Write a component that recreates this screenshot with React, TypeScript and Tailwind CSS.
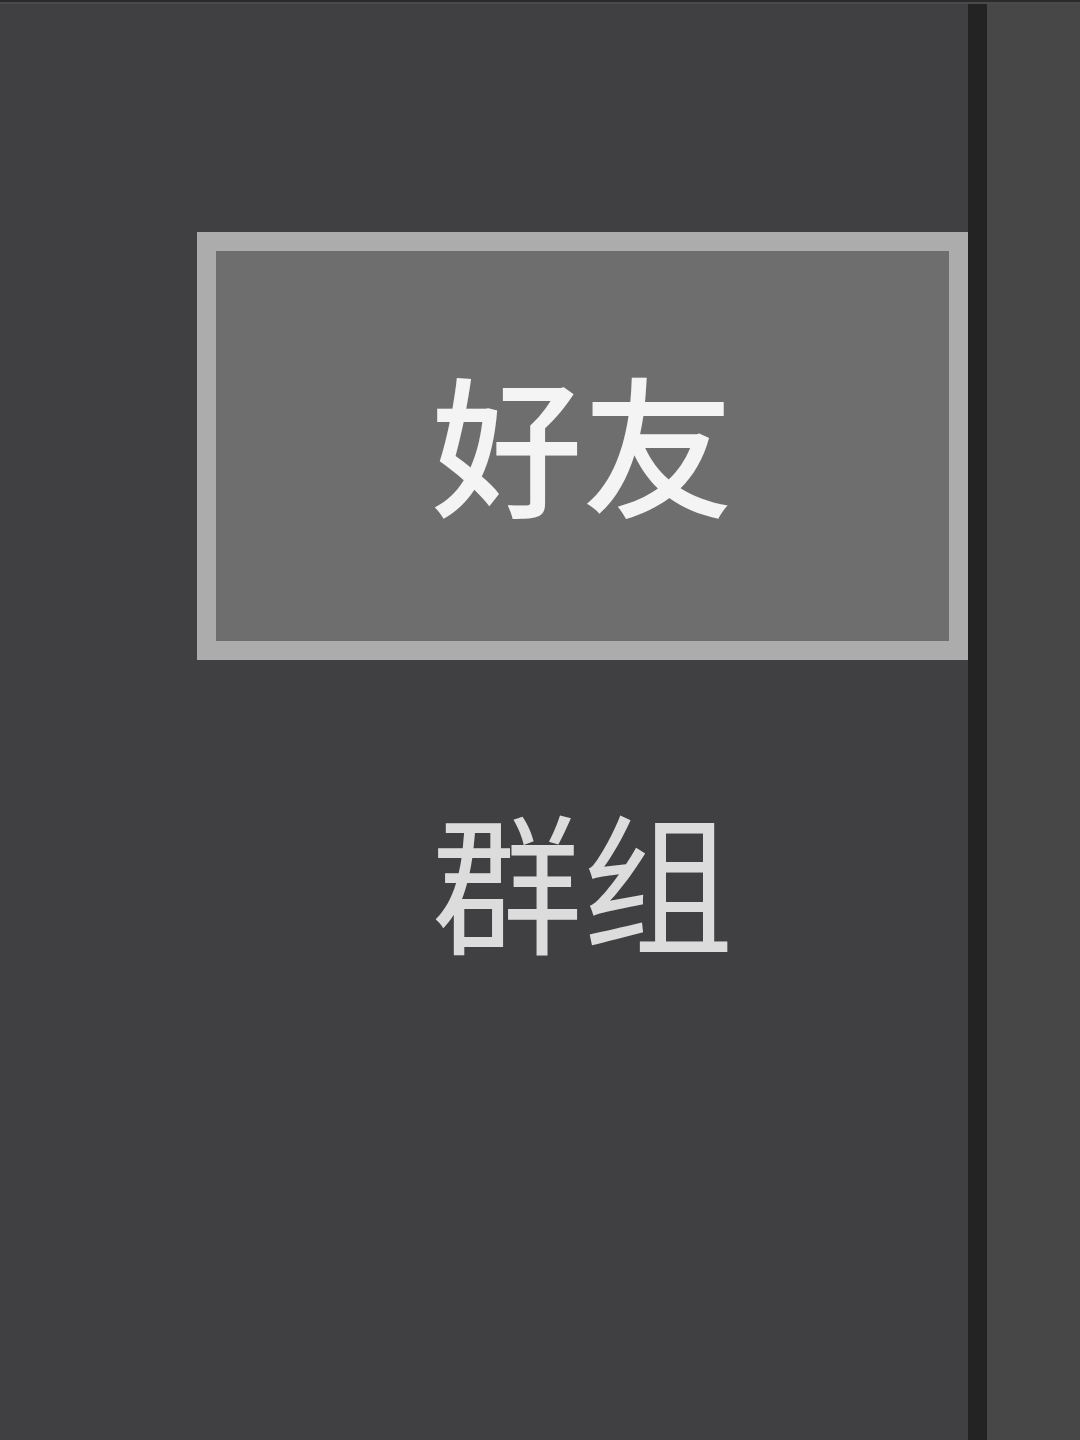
export default function App() {
  return (
    <div
      className="w-[1080px] h-[1440px] flex flex-col bg-[#404042] overflow-hidden"
      style={{ fontFamily: '"Noto Sans CJK SC", "Noto Sans", sans-serif' }}
    >
      <div className="h-[2px] bg-[#2a2a2b]" />
      <div className="h-[2px] bg-[#4a4a4b]" />
      <div className="flex flex-1">
        <div className="w-[968px] flex flex-col pt-[228px]">
          <div className="ml-[197px] h-[428px] border-[19px] border-[#acacac] bg-[#6e6e6e] flex items-center justify-center">
            <span className="text-[151px] leading-none font-medium text-[#f4f4f4] pb-[12px]">好友</span>
          </div>
          <div className="ml-[197px] h-[450px] flex items-center justify-center">
            <span className="text-[151px] leading-none text-[#dcdcdc] pb-[16px]">群组</span>
          </div>
        </div>
        <div className="w-[19px] bg-[#232324]" />
        <div className="flex-1 bg-[#474747]" />
      </div>
    </div>
  );
}
